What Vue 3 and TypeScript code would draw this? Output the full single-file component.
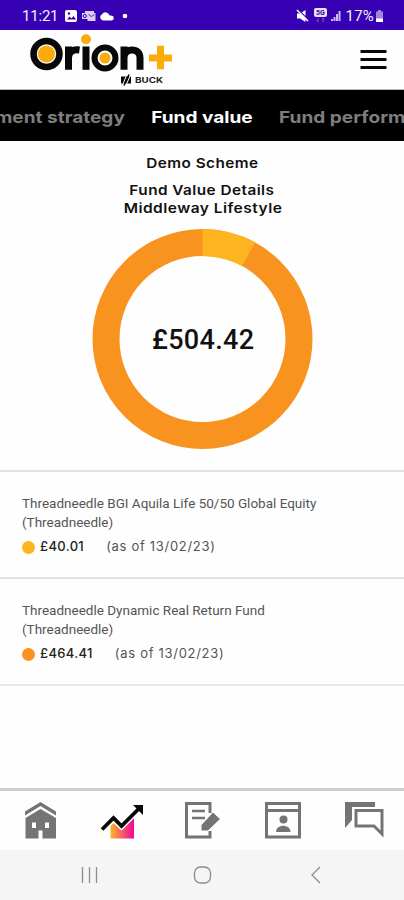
<script setup lang="ts">
interface Fund {
  name: string
  amount: string
  date: string
  color: string
}

const funds: Fund[] = [
  { name: 'Threadneedle BGI Aquila Life 50/50 Global Equity (Threadneedle)', amount: '£40.01', date: '(as of 13/02/23)', color: '#fdb41f' },
  { name: 'Threadneedle Dynamic Real Return Fund (Threadneedle)', amount: '£464.41', date: '(as of 13/02/23)', color: '#f7931e' },
]

const circumference = 2 * Math.PI * 96.5
const share = 40.01 / 504.42
const slice = `${circumference * share} ${circumference}`
</script>

<template>
  <div class="screen">
    <div class="status">
      <span class="clock">11:21</span>
      <svg class="status-left" width="68" height="16" viewBox="0 0 68 16">
        <rect x="1" y="2" width="12" height="12" rx="2" fill="#fff" />
        <path d="M3 11.5l2.5-3 2 2 2-2.5 2.500 3.500z" fill="#3700b3" />
        <circle cx="5" cy="5.500" r="1.200" fill="#3700b3" />
        <path d="M21 3h9v2h1.500v8h-8v-2H18V5h3z" fill="#d9cff2" />
        <circle cx="20.800" cy="8" r="1.600" fill="none" stroke="#3700b3" />
        <path d="M24.500 6.500l3 2 3-2" fill="none" stroke="#3700b3" stroke-width=".8" />
        <path d="M39 12.500a3.300 3.300 0 0 1-1-6.200 4.200 4.200 0 0 1 7.600 1.200c3-.5 4.200 1 4.200 2.500s-1 2.500-2.600 2.500z" fill="#fff" />
        <circle cx="61" cy="8" r="2.300" fill="#fff" />
      </svg>
      <svg class="status-right" width="46" height="16" viewBox="0 0 46 16">
        <path d="M1 5.500h3l5.500-3.500v12L4 10.500H1z" fill="#fff" />
        <path d="M2 1.500l10.500 10.500" stroke="#3700b3" stroke-width="1.500" />
        <path d="M1 2l11 11" stroke="#fff" stroke-width="1.500" />
        <rect x="18" y="0" width="13" height="9" rx="2" fill="#e9e2f8" />
        <text x="24.500" y="7" text-anchor="middle" class="net">5G</text>
        <path d="M22 10v4M20.500 12.500l1.500 1.500M27 14v-4M28.500 11.500L27 10" stroke="#7d5bd0" fill="none" />
        <path d="M35 13v-2h2v2zM37.500 13V9h2v4zM40 13V6h2v7zM42.500 13V3h2v10z" fill="#cabcf0" />
      </svg>
      <span class="percent">17%</span>
      <svg width="9" height="14" viewBox="0 0 9 14">
        <path d="M3 1h3v1.500h2V13H1V2.500h2z" fill="#9f87dc" />
        <path d="M1 9.500h7V13H1z" fill="#fff" />
      </svg>
    </div>

    <header class="header">
      <svg class="logo" width="146" height="56" viewBox="0 0 146 56">
        <circle cx="16.500" cy="22" r="13" fill="#fff" stroke="#080808" stroke-width="6.500" />
        <circle cx="16.500" cy="22" r="8.600" fill="#fbab0a" />
        <path d="M38.500 37.800V14.500M38.500 26c0-6 4-9 11-8" fill="none" stroke="#080808" stroke-width="7" />
        <path d="M56 14.500v23.300" stroke="#080808" stroke-width="7" />
        <circle cx="56" cy="7.200" r="5" fill="#fbab0a" />
        <circle cx="75" cy="26" r="10.500" fill="#fff" stroke="#080808" stroke-width="6" />
        <circle cx="75" cy="26" r="5.500" fill="#fbab0a" />
        <path d="M94 37.800V14.500M94 26c0-5.500 3.500-8 8-8s8 2.500 8 8v11.800" fill="none" stroke="#080808" stroke-width="7" />
        <path d="M130.500 13.800v23.500M119 26h23" stroke="#fbab0a" stroke-width="7" />
        <path d="M91 44.500h10v7H91z" fill="#080808" />
        <path d="M92.500 53.500l3.500-9M96.500 52l4-9" stroke="#fff" stroke-width="1" />
        <path d="M94 53.500l5-11" stroke="#080808" stroke-width="1.600" />
        <text x="105" y="51" textLength="28" lengthAdjust="spacingAndGlyphs" class="buck">BUCK</text>
      </svg>
      <svg width="27" height="21" viewBox="0 0 27 21">
        <path d="M.5 2.500h26M.5 10.500h26M.5 18.500h26" stroke="#080808" stroke-width="2.800" />
      </svg>
    </header>

    <nav class="tabs">
      <span class="tab first">Investment strategy</span>
      <span class="tab active">Fund value</span>
      <span class="tab last">Fund performance</span>
    </nav>

    <main class="summary">
      <h1>Demo Scheme</h1>
      <h2>Fund Value Details</h2>
      <h2 class="plan">Middleway Lifestyle</h2>
      <svg class="donut" width="222" height="222" viewBox="0 0 222 222">
        <circle cx="111.500" cy="111" r="96.500" fill="none" stroke="#f7931e" stroke-width="27" />
        <circle cx="111.500" cy="111" r="96.500" fill="none" stroke="#fdb41f" stroke-width="27" :stroke-dasharray="slice" transform="rotate(-90 111.500 111)" />
        <text x="112" y="120.500" text-anchor="middle" textLength="102" class="total">£504.42</text>
      </svg>
    </main>

    <section class="funds">
      <article v-for="fund in funds" :key="fund.name" class="fund">
        <p class="name">{{ fund.name }}</p>
        <div class="value">
          <i class="dot" :style="{ background: fund.color }"></i>
          <strong>{{ fund.amount }}</strong>
          <span class="date">{{ fund.date }}</span>
        </div>
      </article>
    </section>

    <footer class="bottom">
      <svg width="404" height="59" viewBox="0 0 404 59" fill="#747474">
        <path d="M25 20.500L40.500 11 56 20.500v4L40.500 15 25 24.500z" />
        <path fill-rule="evenodd" d="M25.500 27L40.500 18 56 27v20.500H42.500v-8h-4v8h-13zM32 31.500v5.500h4v-5.500zM45 31.500v5.500h4v-5.500z" />
        <defs>
          <linearGradient id="growth"><stop offset="0" stop-color="#fdb52b" /><stop offset="1" stop-color="#f0059a" /></linearGradient>
        </defs>
        <path d="M110.500 35l3-3 8 7 12.500-12v20.500h-23.500z" fill="url(#growth)" />
        <path d="M102 38.500l11.500-11.500 8 8L139 17.500" fill="none" stroke="#fff" stroke-width="6.500" />
        <path d="M102 38.500l11.500-11.500 8 8L139 17.500" fill="none" stroke="#080808" stroke-width="3.800" />
        <path d="M133 14h10v10z" fill="#080808" />
        <path d="M210 22V12.500h-23.500v33.500H210V40" fill="none" stroke="#747474" stroke-width="3" />
        <path d="M192 20h13M192 27h13" stroke="#747474" stroke-width="2.500" />
        <path d="M201 40v-6l12-13 7.500 7-12.500 12z" stroke="#fff" stroke-width="1" />
        <path fill-rule="evenodd" d="M265 11h36v36.500h-36zM268 14v4h30v-4zM268 21v23.500h30V21z" />
        <circle cx="283.500" cy="28.500" r="4" />
        <path d="M276 41c0-8.500 14.500-8.500 14.500 0z" />
        <path d="M345 11h30v5h-23v13l-7 8z" />
        <path d="M356 19.500h26v23.500l-8-8h-18z" fill="#fff" stroke="#747474" stroke-width="3" />
      </svg>
    </footer>
    <div class="system">
      <svg width="404" height="50" viewBox="0 0 404 50" fill="none" stroke="#8d8d8d" stroke-width="1.300">
        <path d="M82.500 17v16M89.500 17v16M96.500 17v16M320 17l-8 8 8 8" />
        <rect x="194.500" y="17" width="16" height="16" rx="6" />
      </svg>
    </div>
  </div>
</template>

<style>
body {
  background: #fff;
}
</style>

<style scoped>
.screen {
  width: 404px;
  height: 900px;
  overflow: hidden;
  display: flex;
  flex-direction: column;
  background: #fefefe;
  font-family: Inter, sans-serif;
  color: #111;
}
.status {
  box-sizing: border-box;
  height: 30px;
  flex: none;
  display: flex;
  align-items: center;
  padding: 1px 20px 0 22px;
  background: #3700b3;
  color: #f4f0fc;
  font: 15px/20px Roboto, sans-serif;
}
.clock {
  width: 42px;
  letter-spacing: -0.2px;
}
.status-right {
  margin-left: auto;
}
.net {
  font: bold 7px Roboto, sans-serif;
  fill: #3700b3;
}
.percent {
  margin: 0 1px 0 4px;
  letter-spacing: 0.2px;
}
.header {
  box-sizing: border-box;
  height: 60px;
  flex: none;
  display: flex;
  justify-content: space-between;
  align-items: center;
  padding: 0 17px 0 30px;
  border-bottom: 1px solid #b8b8b8;
}
.buck {
  font: 700 8px Inter, sans-serif;
  fill: #222;
}
.tabs {
  box-sizing: border-box;
  height: 51px;
  flex: none;
  display: grid;
  grid-template-columns: minmax(0, 1fr) auto minmax(0, 1fr);
  align-items: center;
  gap: 33px;
  padding-top: 2px;
  background: #000;
  color: #7e7e7e;
  font-size: 16.500px;
  font-weight: 700;
  white-space: nowrap;
}
.tab {
  transform: scaleX(1.155);
}
.first {
  justify-self: end;
  transform-origin: right;
}
.last {
  transform-origin: left;
}
.active {
  color: #fff;
}
.summary {
  height: 329px;
  flex: none;
  display: flex;
  flex-direction: column;
  align-items: center;
}
h1,
h2 {
  margin: 0;
  font-size: 13.500px;
  line-height: 18px;
  font-weight: 600;
  letter-spacing: 0.4px;
  transform: scaleX(1.135);
}
h1 {
  margin: 13px 0 9px;
}
.plan {
  transform: translateX(1px) scaleX(1.15);
}
.donut {
  margin-top: 11px;
}
.total {
  font: 500 27px Roboto, sans-serif;
  fill: #111;
}
.fund {
  box-sizing: border-box;
  height: 107px;
  padding: 22px 22px 0;
  border-top: 2px solid #e2e2e2;
}
.fund:last-child {
  height: 109px;
  border-bottom: 2px solid #e8e8e8;
}
.name {
  margin: 0;
  width: 310px;
  font: 13.500px/19px Roboto, sans-serif;
  color: #555;
}
.value {
  display: flex;
  align-items: center;
  height: 20px;
  margin-top: 4px;
  font-size: 13px;
  color: #555;
}
.dot {
  width: 13px;
  height: 13px;
  margin: 3px 5px 0 0;
  border-radius: 50%;
}
strong {
  margin-right: 22px;
  font-weight: 500;
  letter-spacing: 0.35px;
  color: #222;
}
.date {
  letter-spacing: 0.7px;
}
.bottom {
  height: 59px;
  margin-top: auto;
  border-top: 3px solid #cdcdcd;
}
.system {
  height: 50px;
  background: #f5f5f5;
}
svg {
  display: block;
  flex: none;
}
</style>
